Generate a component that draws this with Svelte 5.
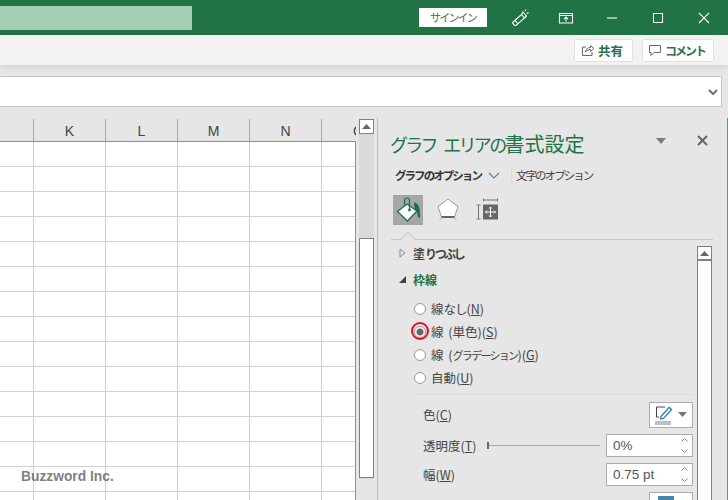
<script>
  const columns = ["K", "L", "M", "N", "O"];
  const rows = Array.from({ length: 15 }, (_, i) => i);
  const cells = Array.from({ length: 6 }, (_, i) => i);
</script>

<div class="window">
  <header class="titlebar">
    <div class="doc-title"></div>
    <button class="signin">サインイン</button>
    <div class="win-icons">
      <svg width="20" height="20" viewBox="0 0 20 20" fill="none" stroke="#fff" stroke-width="1.100">
        <path d="M2.500 14.500 11.500 6.500 14.500 10 6 17.500 4 17z" />
        <path d="M5 12.500 8 16M11.500 6.500l1.500-2.500 3.500 4L14.500 10" />
        <path d="M15 3l1-1.500M17 5.500l1.500-1" />
      </svg>
      <svg width="16" height="14" viewBox="0 0 16 14" fill="none" stroke="#fff" stroke-width="1.100">
        <path d="M1.500 2.500h13v9.500h-13zM1.500 4.500h13" />
        <path d="M8 10.500V6M6 8l2-2 2 2" />
      </svg>
      <svg width="12" height="12" viewBox="0 0 12 12" stroke="#fff" stroke-width="1.100"><path d="M1 6h10" /></svg>
      <svg width="12" height="12" viewBox="0 0 12 12" fill="none" stroke="#fff" stroke-width="1.100"><path d="M1.500 1.500h9v9h-9z" /></svg>
      <svg width="12" height="12" viewBox="0 0 12 12" stroke="#fff" stroke-width="1.100"><path d="M1 1l10 10M11 1 1 11" /></svg>
    </div>
  </header>

  <div class="ribbon">
    <button class="ribbon-btn share">
      <svg width="14" height="14" viewBox="0 0 14 14" fill="none" stroke="#5f6f66" stroke-width="1">
        <path d="M5 4H1.500v8.500h9.500V9" />
        <path d="M4.500 9c.5-3 2.500-4.500 5-4.500V2.500l3.500 3-3.500 3V6.500c-2 0-3.500 1-5 2.500z" />
      </svg>
      <b>共有</b>
    </button>
    <button class="ribbon-btn comment">
      <svg width="14" height="14" viewBox="0 0 14 14" fill="none" stroke="#5f6f66" stroke-width="1">
        <path d="M1.500 2.500h11v7H6l-3 3v-3H1.500z" />
      </svg>
      <b>コメント</b>
    </button>
  </div>

  <div class="formula-wrap">
    <div class="formula">
      <svg width="10" height="6" viewBox="0 0 10 6" fill="none" stroke="#666" stroke-width="1.800"><path d="M1 1l4 4 4-4" /></svg>
    </div>
  </div>

  <div class="workspace">
    <section class="sheet">
      <div class="col-headers">
        <div class="col-spacer"></div>
        {#each columns as col}
          <div class="col-head"><span>{col}</span></div>
        {/each}
      </div>
      <div class="grid-wrap">
        <div class="grid">
          {#each rows as r}
            {#each cells as c}
              <div class="cell"></div>
            {/each}
          {/each}
          <div class="watermark">Buzzword Inc.</div>
        </div>
        <div class="sheet-scroll">
          <div class="scroll-btn">
            <svg width="9" height="5" viewBox="0 0 9 5"><path d="M0 5 4.500 0 9 5z" fill="#666" /></svg>
          </div>
          <div class="scroll-thumb"></div>
        </div>
      </div>
    </section>

    <aside class="pane">
      <div class="pane-head">
        <h2><span class="title-kana">グラフ エリアの</span>書式設定</h2>
        <svg class="pane-menu" width="10" height="6" viewBox="0 0 10 6"><path d="M0 0h10L5 6z" fill="#7a7a7a" /></svg>
        <svg class="pane-close" width="11" height="11" viewBox="0 0 11 11" stroke="#666" stroke-width="2"><path d="M1 1l9 9M10 1l-9 9" /></svg>
      </div>

      <div class="pane-tabs">
        <span class="tab active">グラフのオプション</span>
        <svg width="12" height="7" viewBox="0 0 12 7" fill="none" stroke="#3f88c5" stroke-width="1.200"><path d="M1 1l5 5 5-5" /></svg>
        <span class="tab-sep"></span>
        <span class="tab">文字のオプション</span>
      </div>

      <div class="pane-icons">
        <div class="icon-box on">
          <svg width="26" height="26" viewBox="0 0 26 26">
            <path d="M12 7 22 14 12.500 24 2.500 14.500z" fill="#fff" stroke="#1f6e45" stroke-width="1.300" />
            <path d="M9.500 9V3.500a2.500 2.500 0 0 1 5 0V12" fill="none" stroke="#1f6e45" stroke-width="1.200" />
            <circle cx="14.500" cy="13" r="1.400" fill="#1f6e45" />
            <path d="M19 5.500c4 .5 6.500 4 6 15-1.500 1-2.500-.5-2.500-3 0-2-1-3.500-3-5.500z" fill="#1f6e45" />
          </svg>
        </div>
        <div class="icon-box">
          <svg width="24" height="26" viewBox="0 0 24 26">
            <path d="M12 2 22 9.500 18.500 20h-13L2 9.500z" fill="#fff" stroke="#9a9a9a" stroke-width="1" />
            <path d="M5.500 20h13" stroke="#666" stroke-width="2" />
            <path d="M5.500 21 3.500 24M18.500 21l2 3" stroke="#b5b5b5" stroke-width="1" />
          </svg>
        </div>
        <div class="icon-box">
          <svg width="24" height="26" viewBox="0 0 24 26">
            <rect x="7" y="7.500" width="15" height="15" fill="#666" />
            <path d="M14.500 10v10M9.500 15h10" stroke="#fff" stroke-width="1" />
            <path d="M13 11.500l1.500-1.500 1.500 1.500M13 18.500l1.500 1.500 1.500-1.500M11 13.500 9.500 15l1.500 1.500M18 13.500l1.500 1.500-1.500 1.500" fill="none" stroke="#fff" stroke-width="1" />
            <path d="M7.500 1.500v3M21.500 1.500v3M7.500 3h14" fill="none" stroke="#777" stroke-width="1" />
            <path d="M.5 8h4M.5 22h4M2.500 8v14" fill="none" stroke="#777" stroke-width="1" />
          </svg>
        </div>
      </div>

      <div class="pane-rule">
        <svg class="notch" width="14" height="8" viewBox="0 0 14 8"><path d="M0 8 7 0l7 8" fill="#e6e6e6" stroke="#c6c6c6" stroke-width="1" /></svg>
      </div>

      <div class="pane-body">
        <div class="options">
          <div class="section-head">
            <svg width="7" height="10" viewBox="0 0 7 10"><path d="M1 1l5 4-5 4z" fill="none" stroke="#8a8a8a" /></svg>
            <b>塗<span class="kana-tight">りつぶし</span></b>
          </div>
          <div class="section-head open">
            <svg width="7" height="7" viewBox="0 0 7 7"><path d="M7 0v7H0z" fill="#444" /></svg>
            <b>枠線</b>
          </div>

          <div class="radios">
            <div class="radio-row"><i class="radio"></i>線<span class="kana-small">なし</span>(<u>N</u>)</div>
            <div class="radio-row spaced">
              <i class="radio checked"></i>線 (単色)(<u>S</u>)
              <span class="highlight"></span>
            </div>
            <div class="radio-row spaced"><i class="radio"></i>線 (<span class="kana-grad">グラデーション</span>)(<u>G</u>)</div>
            <div class="radio-row"><i class="radio"></i>自動(<u>U</u>)</div>
          </div>

          <div class="divider"></div>

          <div class="field color">
            <span>色(<u>C</u>)</span>
            <div class="color-btn">
              <svg width="17" height="20" viewBox="0 0 17 20">
                <path d="M10 2H1.500v10H4" fill="none" stroke="#444" stroke-width="1" />
                <path d="M6 11.500 14 2.500l2.500 2L8.500 13.500 5.500 14z" fill="#fff" stroke="#2a80b9" stroke-width="1.300" />
                <rect y="16" width="16" height="4" fill="#bfbfbf" />
              </svg>
              <svg width="9" height="5" viewBox="0 0 9 5"><path d="M0 0h9L4.500 5z" fill="#777" /></svg>
            </div>
          </div>

          <div class="field transparency">
            <span>透明度(<u>T</u>)</span>
            <div class="slider"><i></i></div>
            <div class="spin">
              0%
              <span class="arrows">
                <svg width="7" height="4" viewBox="0 0 7 4" fill="none" stroke="#888"><path d="M.5 3.500l3-3 3 3" /></svg>
                <svg width="7" height="4" viewBox="0 0 7 4" fill="none" stroke="#888"><path d="M.5.500l3 3 3-3" /></svg>
              </span>
            </div>
          </div>

          <div class="field width">
            <span>幅(<u>W</u>)</span>
            <div class="spin">
              0.75 pt
              <span class="arrows">
                <svg width="7" height="4" viewBox="0 0 7 4" fill="none" stroke="#888"><path d="M.5 3.500l3-3 3 3" /></svg>
                <svg width="7" height="4" viewBox="0 0 7 4" fill="none" stroke="#888"><path d="M.5.500l3 3 3-3" /></svg>
              </span>
            </div>
          </div>

          <div class="next-btn"><i></i></div>
        </div>

        <div class="pane-scroll">
          <div class="scroll-btn">
            <svg width="9" height="5" viewBox="0 0 9 5"><path d="M0 5 4.500 0 9 5z" fill="#666" /></svg>
          </div>
        </div>
      </div>
    </aside>
  </div>
</div>

<style>
  :global(body) {
    margin: 0;
  }

  .window {
    width: 728px;
    height: 500px;
    overflow: hidden;
    display: flex;
    flex-direction: column;
    background: #e6e6e6;
    font-family: "Noto Sans CJK JP", "Liberation Sans", sans-serif;
    color: #444;
  }

  button {
    font-family: inherit;
    padding: 0;
  }

  .titlebar {
    height: 35px;
    flex: none;
    display: flex;
    align-items: center;
    background: #217346;
  }

  .doc-title {
    width: 192px;
    height: 24px;
    background: #a3cfb5;
    margin-right: 227px;
  }

  .signin {
    width: 68px;
    height: 19px;
    border: 0;
    background: #fff;
    color: #50685b;
    font-size: 11px;
    letter-spacing: -1.800px;
    line-height: 19px;
  }

  .win-icons {
    display: flex;
    align-items: center;
    margin-left: 23px;
  }

  .win-icons svg:nth-child(1) {
    margin-right: 28px;
  }

  .win-icons svg:nth-child(2) {
    margin-right: 32px;
  }

  .win-icons svg:nth-child(3),
  .win-icons svg:nth-child(4) {
    margin-right: 34px;
  }

  .ribbon {
    height: 30px;
    flex: none;
    display: flex;
    justify-content: flex-end;
    align-items: center;
    gap: 9px;
    padding-right: 14px;
    background: #f3f2f1;
    box-shadow: 0 3px 6px rgba(0, 0, 0, 0.07);
    position: relative;
  }

  .ribbon-btn {
    height: 23px;
    display: flex;
    align-items: center;
    gap: 3px;
    border: 1px solid #e3e2e1;
    border-radius: 2px;
    background: #fff;
    color: #2f6f50;
    font-size: 12.500px;
    box-sizing: border-box;
  }

  .share {
    width: 59px;
    padding-left: 6px;
  }

  .comment {
    width: 72px;
    padding-left: 5px;
  }

  .comment b {
    font-size: 12px;
    letter-spacing: -2px;
  }

  .formula-wrap {
    flex: none;
    padding: 11px 6px 11px 0;
  }

  .formula {
    height: 29px;
    display: flex;
    align-items: center;
    justify-content: flex-end;
    padding-right: 3px;
    background: #fff;
    border: 1px solid #c6c6c6;
    border-left: 0;
  }

  .workspace {
    flex: 1;
    min-height: 0;
    display: flex;
  }

  .sheet {
    width: 377px;
    flex: none;
  }

  .col-headers {
    height: 23px;
    display: flex;
  }

  .col-spacer {
    width: 33px;
    border-right: 1px solid #a8a8a8;
    margin-top: 1px;
  }

  .col-head {
    width: 71px;
    border-right: 1px solid #a8a8a8;
    text-align: center;
    font: 14px/25px "Liberation Sans", sans-serif;
    color: #444;
    margin-top: 1px;
  }

  .col-head:last-child {
    width: 34px;
    border-right: 0;
    overflow: hidden;
    text-align: left;
    padding-left: 31px;
    box-sizing: border-box;
  }

  .grid-wrap {
    display: flex;
    align-items: flex-start;
  }

  .grid {
    width: 356px;
    flex: none;
    display: grid;
    grid-template-columns: 34px repeat(4, 72px) 33px;
    grid-auto-rows: 25px;
    background: #fff;
    border-top: 1px solid #8f8f8f;
    border-right: 1px solid #8f8f8f;
    box-sizing: border-box;
    position: relative;
  }

  .cell {
    border-right: 1px solid #d0d0d0;
    border-bottom: 1px solid #d0d0d0;
    box-sizing: border-box;
  }

  .cell:nth-child(6n) {
    border-right: 0;
  }

  .watermark {
    position: absolute;
    left: 21px;
    top: 326px;
    font: bold 13.800px/18px "Liberation Sans", sans-serif;
    color: rgba(90, 90, 90, 0.78);
  }

  .sheet-scroll {
    width: 15px;
    height: 360px;
    flex: none;
    margin: -22px 0 0 3px;
    background: #dadada;
  }

  .scroll-btn {
    width: 15px;
    height: 15px;
    box-sizing: border-box;
    background: #fff;
    border: 1px solid #808080;
    display: flex;
    align-items: center;
    justify-content: center;
  }

  .scroll-thumb {
    height: 240px;
    margin-top: 104px;
    box-sizing: border-box;
    background: #fff;
    border: 1px solid #808080;
  }

  .pane {
    flex: 1;
    min-width: 0;
    border-left: 1px solid #c0c0c0;
    border-right: 1px solid #5b9a78;
    position: relative;
  }

  .pane-head {
    display: flex;
    align-items: center;
    height: 28px;
    padding: 11px 19px 0 12px;
  }

  .pane-head h2 {
    margin: 0;
    flex: 1;
    font-size: 20px;
    font-weight: 400;
    color: #217346;
    white-space: nowrap;
  }

  .title-kana {
    font-size: 18px;
    letter-spacing: -2.700px;
    word-spacing: 6px;
  }

  .pane-menu {
    margin: 0 31px 4px 0;
  }

  .pane-close {
    margin-bottom: 6px;
  }

  .pane-tabs {
    display: flex;
    align-items: center;
    height: 24px;
    margin-top: 6px;
    padding-left: 17px;
    font-size: 11.500px;
    letter-spacing: -1.950px;
  }

  .tab.active {
    font-weight: 700;
    color: #333;
    margin-right: 7px;
  }

  .tab-sep {
    width: 1px;
    height: 16px;
    background: #dadada;
    margin: 0 4px 0 11px;
  }

  .pane-icons {
    display: flex;
    height: 30px;
    margin: 8px 0 0 15px;
    gap: 10px;
  }

  .icon-box {
    width: 30px;
    height: 30px;
    display: flex;
    align-items: center;
    justify-content: center;
  }

  .icon-box.on {
    background: #a6a6a6;
  }

  .pane-rule {
    position: relative;
    margin: 14px 14px 0 13px;
    height: 1px;
    background: #c6c6c6;
  }

  .notch {
    position: absolute;
    left: 10px;
    top: -7px;
  }

  .pane-body {
    display: flex;
    padding-left: 21px;
  }

  .options {
    width: 298px;
    flex: none;
  }

  .section-head {
    display: flex;
    align-items: center;
    gap: 7px;
    height: 26px;
    font-size: 12px;
    color: #444;
  }

  .kana-tight {
    letter-spacing: -2.500px;
  }

  .section-head.open {
    color: #217346;
  }

  .radios {
    margin: 5px 0 0 15px;
  }

  .radio-row {
    position: relative;
    display: flex;
    align-items: center;
    height: 23px;
    font-size: 12.500px;
    white-space: pre;
  }

  .radio-row.spaced {
    word-spacing: 2px;
  }

  .kana-small {
    letter-spacing: -1px;
  }

  .kana-grad {
    font-size: 11px;
    letter-spacing: -1.700px;
  }

  .radio {
    width: 10px;
    height: 10px;
    margin-right: 5px;
    border: 1px solid #9a9a9a;
    border-radius: 50%;
    background: #fff;
    flex: none;
  }

  .radio.checked {
    background: radial-gradient(circle, #666 0 3px, #fff 4px);
  }

  .highlight {
    position: absolute;
    left: -3px;
    top: 2px;
    width: 14px;
    height: 14px;
    border: 2px solid #e0101e;
    border-radius: 50%;
  }

  .divider {
    height: 1px;
    margin: 5px 0 0 15px;
    width: 278px;
    background: #dcdcdc;
  }

  .field {
    position: relative;
    display: flex;
    align-items: center;
    padding: 0 4px 0 24px;
    font-size: 12.500px;
  }

  .field > span:first-child {
    white-space: nowrap;
  }

  .field.color {
    height: 27px;
    margin-top: 6px;
    justify-content: space-between;
  }

  .color-btn {
    width: 44px;
    height: 26px;
    box-sizing: border-box;
    border: 1px solid #ababab;
    background: #fff;
    display: flex;
    align-items: center;
    justify-content: center;
    gap: 6px;
  }

  .field.transparency {
    height: 23px;
    margin-top: 6px;
  }

  .slider {
    flex: 1;
    height: 7px;
    margin: 0 6px 0 11px;
    position: relative;
  }

  .slider::before {
    content: "";
    position: absolute;
    left: 0;
    right: 0;
    top: 3px;
    height: 1px;
    background: #a6a6a6;
  }

  .slider i {
    position: absolute;
    left: 0;
    top: 0;
    width: 2px;
    height: 7px;
    background: #666;
  }

  .spin {
    width: 87px;
    height: 23px;
    box-sizing: border-box;
    border: 1px solid #ababab;
    background: #fff;
    display: flex;
    align-items: center;
    padding-left: 6px;
    font-family: "Liberation Sans", sans-serif;
    font-size: 13.500px;
    color: #555;
    position: relative;
  }

  .field.width {
    height: 23px;
    margin-top: 6px;
    justify-content: space-between;
  }

  .arrows {
    position: absolute;
    right: 2px;
    top: 3px;
    bottom: 3px;
    width: 12px;
    display: flex;
    flex-direction: column;
    justify-content: space-between;
    align-items: center;
  }

  .next-btn {
    width: 44px;
    height: 26px;
    box-sizing: border-box;
    border: 1px solid #ababab;
    background: #fff;
    margin: 6px 0 0 250px;
    padding: 3px 0 0 8px;
  }

  .next-btn i {
    display: block;
    width: 16px;
    height: 4px;
    background: #4a86a8;
  }

  .pane-scroll {
    width: 15px;
    height: 260px;
    margin-top: 6px;
    background: #fff;
    border-left: 1px solid #808080;
    border-right: 1px solid #808080;
    box-sizing: border-box;
    flex: none;
  }

  .pane-scroll .scroll-btn {
    margin-left: -1px;
    border-bottom-width: 2px;
  }
</style>
